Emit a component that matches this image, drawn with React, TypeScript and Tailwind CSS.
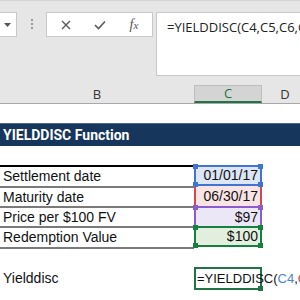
import React from 'react';

const cellFont = { fontFamily: '"Liberation Sans", Arial, sans-serif' };
const uiFont = { fontFamily: '"Open Sans", "Noto Sans", sans-serif' };

const Handle: React.FC<{ pos: string; color: string }> = ({ pos, color }) => (
  <span className={`absolute w-[5px] h-[5px] ${pos} ${color}`} />
);

const App: React.FC = () => {
  return (
    <div className="w-[300px] h-[300px] overflow-hidden bg-white text-[#111]" style={cellFont}>
      {/* Formula bar */}
      <div className="h-[75px] bg-[#e6e6e6] border-t border-[#d4d4d4] flex items-start pt-[11px]">
        <div className="w-[17px] h-[25px] bg-white border border-l-0 border-[#c8c8c8] flex items-center pl-[4px]">
          <svg width="7" height="4" viewBox="0 0 7 4">
            <path d="M0 0 L7 0 L3.5 4 Z" fill="#555" />
          </svg>
        </div>
        <div className="ml-[14px] mt-[7px] flex flex-col gap-[2px]">
          <span className="w-[2px] h-[2px] bg-[#9a9a9a]" />
          <span className="w-[2px] h-[2px] bg-[#9a9a9a]" />
          <span className="w-[2px] h-[2px] bg-[#9a9a9a]" />
        </div>
        <div className="ml-[13px] w-[107px] h-[25px] bg-white border border-[#c8c8c8] flex items-center pl-[2px]">
          <div className="w-[34px] flex justify-center">
            <svg width="10" height="10" viewBox="0 0 10 10">
              <path d="M1 1 L9 9 M9 1 L1 9" stroke="#5a5a5a" strokeWidth="1.4" />
            </svg>
          </div>
          <div className="w-[34px] flex justify-center">
            <svg width="12" height="10" viewBox="0 0 12 10">
              <path d="M1 5 L4.5 8.5 L11 1.5" stroke="#5a5a5a" strokeWidth="1.6" fill="none" />
            </svg>
          </div>
          <div className="w-[34px] flex justify-center">
            <span className="italic text-[14px] text-[#555] leading-none" style={{ fontFamily: '"Liberation Serif", serif' }}>
              f<span className="text-[11px]">x</span>
            </span>
          </div>
        </div>
        <div className="ml-[3px] flex-1 min-w-0 h-[64px] bg-white border border-r-0 border-[#c8c8c8] pl-[10px] pt-[5px] overflow-hidden whitespace-nowrap text-[13px] text-[#222]" style={uiFont}>
          =YIELDDISC(C4,C5,C6,C7)
        </div>
      </div>

      {/* Column headers */}
      <div className="h-[29px] bg-[#e6e6e6] border-b border-[#a8a8a8] pt-[10px]">
        <div className="grid grid-cols-[194px_68px_1fr] h-[18px] text-[13px] text-[#333]" style={uiFont}>
          <div className="flex items-center justify-center leading-none">B</div>
          <div className="flex items-center justify-center leading-none bg-[#d4d4d4] border-x border-t border-[#bdbdbd] border-b-2 border-b-[#217346] text-[#217346]">C</div>
          <div className="flex items-center justify-center leading-none pl-[8px]">D</div>
        </div>
      </div>

      {/* Sheet */}
      <div className="grid grid-cols-[194px_68px_1fr] text-[14px]">
        <div className="h-[19px] col-span-3" />

        <div className="h-[23px] col-span-3 bg-[#16365c] border-t border-[#4a6890] flex items-center pl-[3px] text-white font-bold" style={{ fontFamily: 'Roboto, "Liberation Sans", sans-serif' }}>
          YIELDDISC Function
        </div>

        <div className="h-[19px] col-span-3" />

        {/* Row 4 */}
        <div className="h-[21px] border-t-2 border-black flex items-center pl-[3px]">Settlement date</div>
        <div className="relative h-[21px] bg-[#dce6f6] border-2 border-[#3f74d0] flex items-center justify-end pr-[2px]">
          01/01/17
          <Handle pos="-top-[3px] -left-[3px]" color="bg-[#3f74d0]" />
          <Handle pos="-top-[3px] -right-[3px]" color="bg-[#3f74d0]" />
          <Handle pos="-bottom-[3px] -left-[3px]" color="bg-[#3f74d0]" />
          <Handle pos="-bottom-[3px] -right-[3px]" color="bg-[#3f74d0]" />
        </div>
        <div />

        {/* Row 5 */}
        <div className="h-[20px] border-t-2 border-[#7a7a7a] flex items-center pl-[3px]">Maturity date</div>
        <div className="h-[20px] bg-[#f8e4e4] border-x-2 border-[#cf4b4b] flex items-center justify-end pr-[2px]">06/30/17</div>
        <div />

        {/* Row 6 */}
        <div className="h-[20px] border-t-2 border-[#7a7a7a] flex items-center pl-[3px]">Price per $100 FV</div>
        <div className="relative h-[20px] bg-[#ece7f6] border-t-2 border-x-2 border-[#8a5ccc] flex items-center justify-end pr-[2px]">
          $97
          <Handle pos="-top-[3px] -left-[3px]" color="bg-[#8a5ccc]" />
          <Handle pos="-top-[3px] -right-[3px]" color="bg-[#8a5ccc]" />
        </div>
        <div />

        {/* Row 7 */}
        <div className="h-[21px] border-t-2 border-[#7a7a7a] flex items-center pl-[3px]">Redemption Value</div>
        <div className="relative h-[21px] bg-[#e2efdf] border-2 border-[#16813e] flex items-center justify-end pr-[2px]">
          $100
          <Handle pos="-top-[3px] -left-[3px]" color="bg-[#16813e]" />
          <Handle pos="-top-[3px] -right-[3px]" color="bg-[#16813e]" />
          <Handle pos="-bottom-[3px] -left-[3px]" color="bg-[#16813e]" />
          <Handle pos="-bottom-[3px] -right-[3px]" color="bg-[#16813e]" />
        </div>
        <div />

        {/* Row 8 */}
        <div className="h-[20px] border-t-2 border-[#7a7a7a]" />
        <div className="h-[20px]" />
        <div />

        {/* Row 9 */}
        <div className="h-[23px] flex items-center pl-[3px]">Yielddisc</div>
        <div className="relative h-[23px] border-2 border-[#217346] flex items-center pl-[1px] whitespace-nowrap overflow-visible text-[13px]">
          <span className="relative z-10">
            =YIELDDISC(<span className="text-[#4a86d8]">C4</span>,<span className="text-[#cf4b4b]">C5</span>,<span className="text-[#8a5ccc]">C6</span>,<span className="text-[#16813e]">C7</span>)
          </span>
          <Handle pos="-bottom-[3px] -right-[3px]" color="bg-[#217346]" />
        </div>
        <div />
      </div>
    </div>
  );
};

export default App;
